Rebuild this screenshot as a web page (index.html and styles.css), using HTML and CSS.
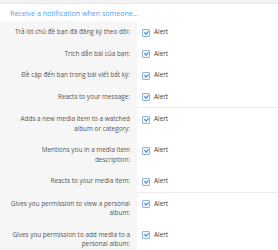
FILE: index.html
```html
<!DOCTYPE html>
<html>
<head>
<meta charset="utf-8">
<link rel="stylesheet" href="styles.css">
</head>
<body>
<div class="block">
  <div class="topbar"></div>
  <h3 class="head">Receive a notification when someone...</h3>
  <div class="rows">
    <div class="row"><div class="label">Trả lời chủ đề bạn đã đăng ký theo dõi:</div><div class="ctrl"><span class="cb"></span>Alert</div></div>
    <div class="row"><div class="label">Trích dẫn bài của bạn:</div><div class="ctrl"><span class="cb"></span>Alert</div></div>
    <div class="row"><div class="label">Đề cập đến bạn trong bài viết bất kỳ:</div><div class="ctrl"><span class="cb"></span>Alert</div></div>
    <div class="row sep"><div class="label">Reacts to your message:</div><div class="ctrl"><span class="cb"></span>Alert</div></div>
    <div class="row"><div class="label">Adds a new media item to a watched album or category:</div><div class="ctrl"><span class="cb"></span>Alert</div></div>
    <div class="row"><div class="label">Mentions you in a media item description:</div><div class="ctrl"><span class="cb"></span>Alert</div></div>
    <div class="row sep"><div class="label">Reacts to your media item:</div><div class="ctrl"><span class="cb"></span>Alert</div></div>
    <div class="row"><div class="label">Gives you permission to view a personal album:</div><div class="ctrl"><span class="cb"></span>Alert</div></div>
    <div class="row sep"><div class="label">Gives you permission to add media to a personal album:</div><div class="ctrl"><span class="cb"></span>Alert</div></div>
  </div>
</div>
</body>
</html>
```
FILE: styles.css
```css
html, body { margin: 0; padding: 0; background: #fff; }
body { font-family: "Open Sans", "Liberation Sans", sans-serif; font-size: 6.4px; color: #555; }
.block { width: 278px; height: 250px; overflow: hidden; }
.topbar { height: 3px; background: #f3f3f3; border-bottom: 1px solid #ebebeb; }
.head { margin: 0; font-weight: normal; font-size: 7.1px; color: #47a7eb; padding: 4px 10px 3px 10px; line-height: 10px; }
.rows { display: flex; flex-direction: column; }
.row { display: grid; grid-template-columns: 137px 1fr; }
.row.sep .ctrl { border-bottom: 1px solid #ededed; }
.label { background: #f6f6f6; text-align: right; padding: 6px 7px 6px 6px; line-height: 9.5px; }
.ctrl { padding: 6px 5px; line-height: 9.5px; display: flex; align-items: flex-start; gap: 4px; color: #3a3a3a; }
.cb { width: 6px; height: 6px; border: 1px solid #8fb6d8; border-radius: 1px; margin-top: 1.5px; background: #eef5fb; position: relative; flex: none; }
.cb::after { content: ""; position: absolute; left: 1.5px; top: 0px; width: 1.5px; height: 3px; border: solid #3d86c6; border-width: 0 1px 1px 0; transform: rotate(45deg); }
```
